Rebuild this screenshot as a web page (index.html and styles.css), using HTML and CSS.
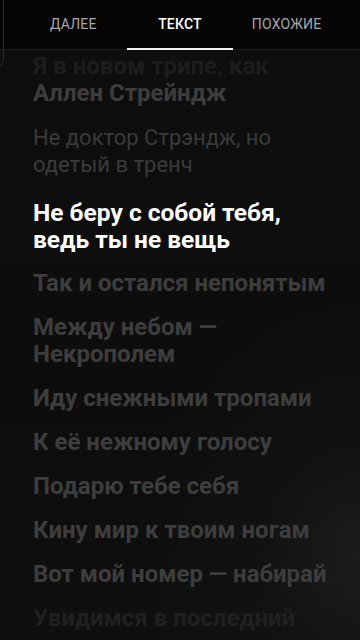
FILE: index.html
```html
<!DOCTYPE html>
<html lang="ru">
<head>
<meta charset="utf-8">
<link rel="stylesheet" href="styles.css">
</head>
<body>
<div class="screen">
  <div class="sheet-edge"></div>
  <header class="tabs">
    <div class="tab">ДАЛЕЕ</div>
    <div class="tab active">ТЕКСТ</div>
    <div class="tab">ПОХОЖИЕ</div>
  </header>
  <main class="lyrics">
    <div class="block"><span class="faded">Я в новом трипе, как</span><br>Аллен Стрейндж</div>
    <div class="block light">Не доктор Стрэндж, но<br>одетый в тренч</div>
    <div class="block current">Не беру с собой тебя,<br>ведь ты не вещь</div>
    <div class="block">Так и остался непонятым</div>
    <div class="block">Между небом —<br>Некрополем</div>
    <div class="block">Иду снежными тропами</div>
    <div class="block">К её нежному голосу</div>
    <div class="block">Подарю тебе себя</div>
    <div class="block">Кину мир к твоим ногам</div>
    <div class="block">Вот мой номер — набирай</div>
    <div class="block dim">Увидимся в последний</div>
  </main>
</div>
</body>
</html>
```
FILE: styles.css
```css
* { box-sizing: border-box; }
html, body {
  margin: 0;
  padding: 0;
  background: #0b0b0b;
}
.screen {
  position: relative;
  width: 360px;
  height: 640px;
  overflow: hidden;
  font-family: Roboto, "Noto Sans", sans-serif;
  background:
    radial-gradient(ellipse 220px 260px at 360px 560px, #1c1c1c 0%, rgba(20,20,20,0.6) 45%, rgba(14,14,14,0) 100%),
    linear-gradient(180deg, #0e0e0e 0%, #0d0d0d 60%, #0f0f0f 100%);
}
.sheet-edge {
  position: absolute;
  left: -10px;
  top: -10px;
  width: 14px;
  height: 76px;
  border: 1.5px solid #2c2c2c;
  border-radius: 0 0 6px 0;
  z-index: 3;
}
.tabs {
  position: relative;
  z-index: 2;
  height: 50px;
  display: grid;
  grid-template-columns: 1fr 1fr 1fr;
  padding: 0 20px;
  background: #050505;
  border-bottom: 1px solid #1e1e1e;
}
.tab {
  display: flex;
  align-items: center;
  justify-content: center;
  font-size: 14px;
  font-weight: 400;
  color: #a8a8a8;
  letter-spacing: 0.2px;
  padding-bottom: 2px;
}
.tab.active {
  color: #ffffff;
  font-weight: 500;
  border-bottom: 2px solid #f2f2f2;
  padding-bottom: 0;
  margin-bottom: -1px;
}
.lyrics {
  display: flex;
  flex-direction: column;
  gap: 17px;
  padding: 3px 10px 0 33px;
}
.block {
  font-size: 24px;
  line-height: 27px;
  font-weight: 700;
  color: #3d3d3d;
  white-space: nowrap;
}
.faded { color: #1d1d1d; }
.block.light { font-weight: 400; font-size: 22px; color: #3a3a3a; }
.block.current {
  color: #ffffff;
  font-size: 24.5px;
  margin-top: 4px;
}
.block.dim { color: #202020; }
```
